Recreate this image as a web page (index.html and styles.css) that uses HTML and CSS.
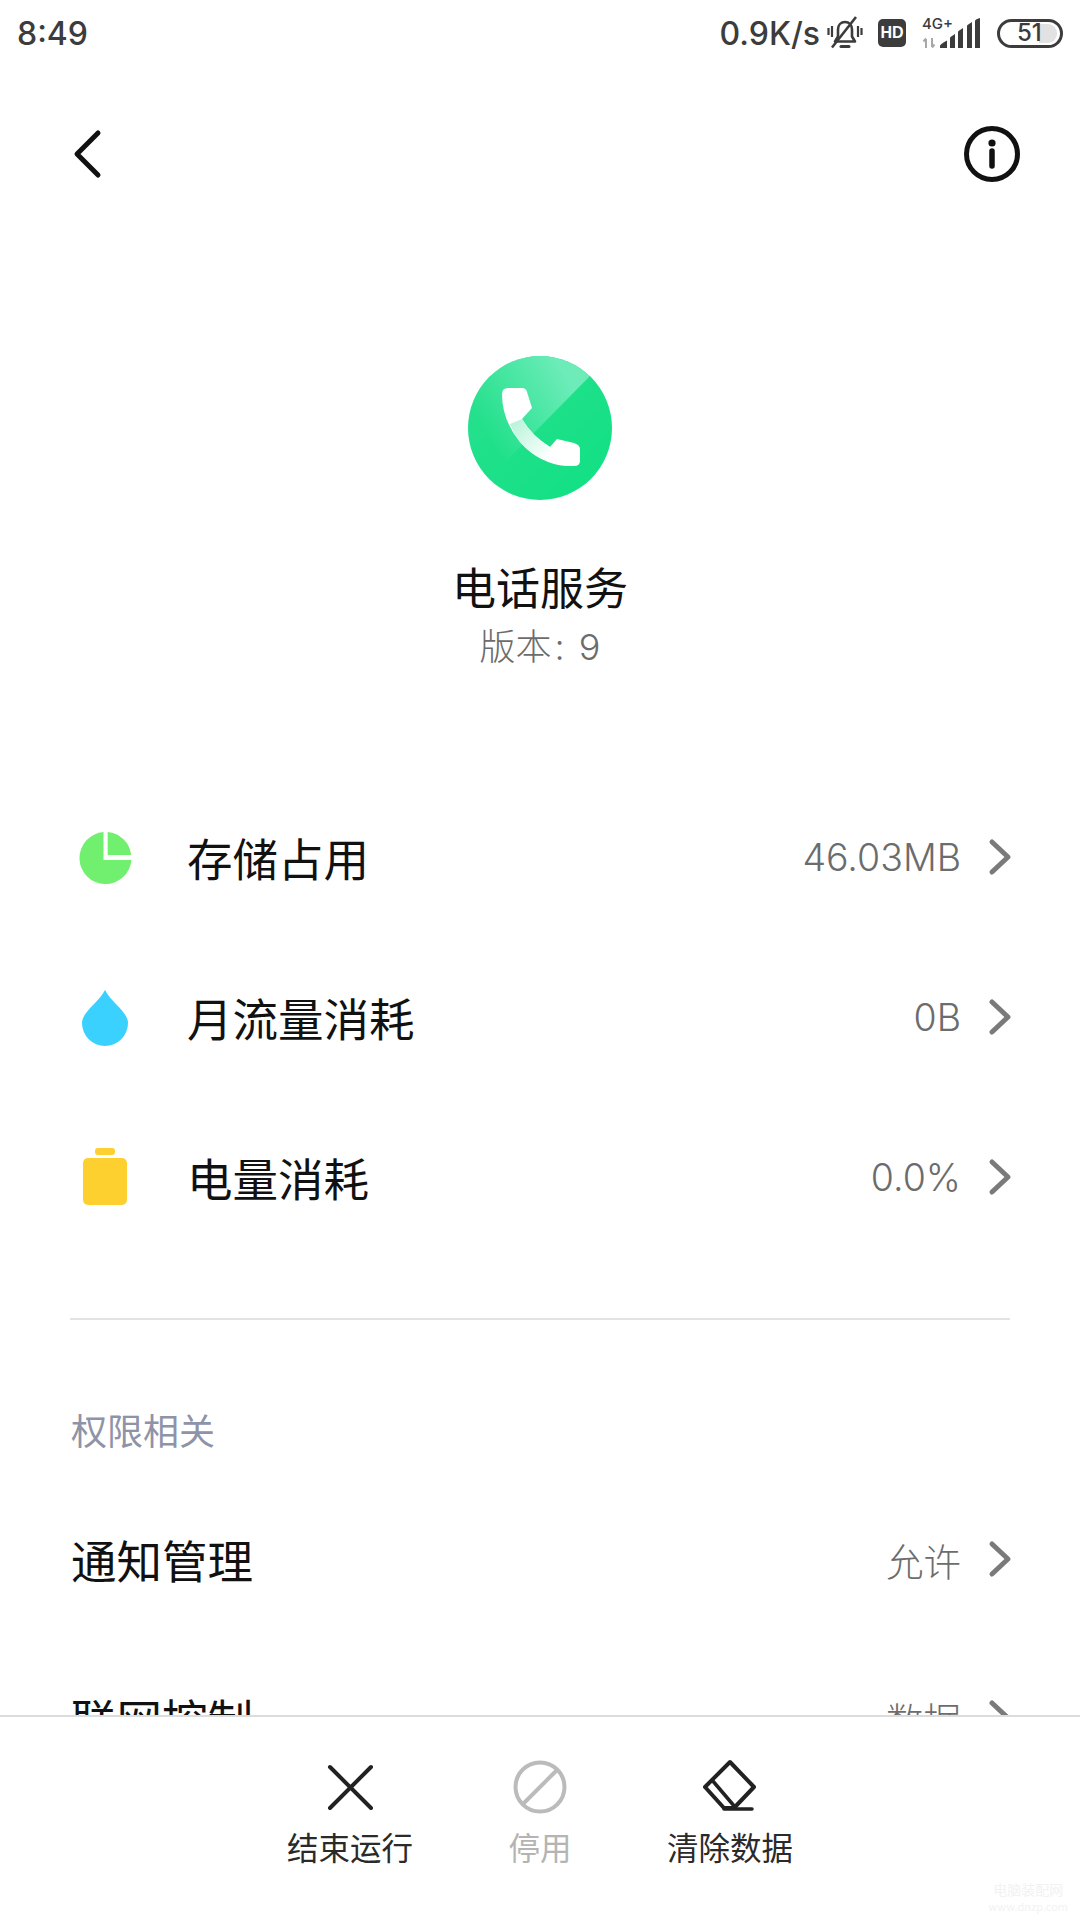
FILE: index.html
```html
<!DOCTYPE html>
<html lang="zh-CN">
<head>
<meta charset="utf-8">
<title>电话服务</title>
<link rel="stylesheet" href="styles.css">
</head>
<body>
<div class="page">
  <div class="main">
    <header class="status">
      <span class="time">8:49</span>
      <div class="status-right">
        <span class="speed">0.9K/s</span>
        <svg class="ic-bell" viewBox="0 0 36 34" width="36" height="34"><path d="M8 25.500h20l-3-5v-7c0-4.500-3-7.500-7-7.500s-7 3-7 7.500v7z" fill="none" stroke="#3c3c3c" stroke-width="2.600" stroke-linejoin="round"/><path d="M14 30.500h8" stroke="#3c3c3c" stroke-width="3" stroke-linecap="round"/><path d="M5 31.500L29 1" stroke="#3c3c3c" stroke-width="2.600"/><path d="M1.500 12v7M5 10v11M31 10v11M34.500 12v7" stroke="#3c3c3c" stroke-width="2.200"/></svg>
        <span class="hd">HD</span>
        <div class="signal">
          <span class="net">4G+</span>
          <svg viewBox="0 0 58 30" width="58" height="30"><path d="M4 30V21M1.500 23.500L4 20.500M10 20v9M12.500 26.500L10 29.500" stroke="#a8a8a8" stroke-width="2" fill="none"/><path d="M18 30v-2q0-2 7-5.500V30zM28 30V20q0-1 2-2l3-2v14zM36 30V14q0-1 2-2l3-2v20zM45 30V8q0-1 2-2l3-2v26zM53 30V3q0-1 2-2l3-1v30z" fill="#3c3c3c"/></svg>
        </div>
        <div class="battery"><span class="battery-fill"></span><span class="battery-num">51</span></div>
      </div>
    </header>

    <nav class="topbar">
      <svg viewBox="0 0 30 48" width="30" height="48"><path d="M26 3L5 24l21 21" fill="none" stroke="#111" stroke-width="5" stroke-linecap="round" stroke-linejoin="round"/></svg>
      <svg viewBox="0 0 56 56" width="56" height="56"><circle cx="28" cy="28" r="25.500" fill="none" stroke="#111" stroke-width="5"/><circle cx="28" cy="17" r="3.600" fill="#111"/><path d="M28 25v15" stroke="#111" stroke-width="5.500" stroke-linecap="round"/></svg>
    </nav>

    <section class="app">
      <svg class="app-icon" viewBox="0 0 144 144" width="144" height="144">
        <defs>
          <linearGradient id="gBase" x1="0" y1="0" x2="1" y2="1"><stop offset="0" stop-color="#2ae08f"/><stop offset="1" stop-color="#10e083"/></linearGradient>
          <linearGradient id="gShine" gradientUnits="userSpaceOnUse" x1="108" y1="36" x2="22" y2="84"><stop offset="0" stop-color="#6decb9"/><stop offset="1" stop-color="#6decb9" stop-opacity="0"/></linearGradient>
          <linearGradient id="gPale" gradientUnits="userSpaceOnUse" x1="46" y1="62" x2="84" y2="100"><stop offset="0" stop-color="#b5f3d9"/><stop offset="1" stop-color="#fff"/></linearGradient>
          <clipPath id="cCircle"><circle cx="72" cy="72" r="72"/></clipPath>
        </defs>
        <circle cx="72" cy="72" r="72" fill="url(#gBase)"/>
        <path d="M121 21L0 144V0H121z" fill="url(#gShine)" clip-path="url(#cCircle)"/>
        <path d="M34 38Q34 32 40 32H54Q58 32 59 36L64 52 54 63Q64 80 82 91L89 83 106 87Q112 89 112 93V105Q112 110 106 110H98Q72 108 52 86 34 64 34 38z" fill="#fff"/>
        <path d="M54 63Q64 80 82 91L76 104Q62 98 52 86 46 78 42 68z" fill="url(#gPale)"/>
      </svg>
      <h1 class="app-name">电话服务</h1>
      <p class="app-version">版本<span class="colon">:</span> 9</p>
    </section>

    <section class="stats">
      <div class="row">
        <svg class="row-icon" viewBox="0 0 56 56" width="56" height="56"><path d="M26.500 3.100A26 26 0 1 0 54.400 31H26.500z" fill="#71ef6f"/><path d="M30.700 3.100A26 26 0 0 1 54.200 26H30.700z" fill="#71ef6f"/></svg>
        <span class="row-label">存储占用</span><span class="row-value">46.03MB</span>
        <svg class="chev" viewBox="0 0 24 36" width="24" height="36"><path d="M4 3l16 15L4 33" fill="none" stroke="#7a7a7a" stroke-width="5" stroke-linecap="round" stroke-linejoin="round"/></svg>
      </div>
      <div class="row">
        <svg class="row-icon" viewBox="0 0 56 56" width="56" height="56"><path d="M28 1C22 13 5 23 5 34a23 23 0 0 0 46 0C51 23 34 13 28 1z" fill="#3ad1ff"/></svg>
        <span class="row-label">月流量消耗</span><span class="row-value">0B</span>
        <svg class="chev" viewBox="0 0 24 36" width="24" height="36"><path d="M4 3l16 15L4 33" fill="none" stroke="#7a7a7a" stroke-width="5" stroke-linecap="round" stroke-linejoin="round"/></svg>
      </div>
      <div class="row">
        <svg class="row-icon" viewBox="0 0 56 56" width="56" height="56"><rect x="18" y="-1" width="20" height="7" rx="3" fill="#fdd02f"/><rect x="6" y="9" width="44" height="47" rx="5" fill="#fdd02f"/></svg>
        <span class="row-label">电量消耗</span><span class="row-value">0.0%</span>
        <svg class="chev" viewBox="0 0 24 36" width="24" height="36"><path d="M4 3l16 15L4 33" fill="none" stroke="#7a7a7a" stroke-width="5" stroke-linecap="round" stroke-linejoin="round"/></svg>
      </div>
    </section>

    <hr class="divider">

    <h2 class="section-title">权限相关</h2>
    <div class="row row-plain">
      <span class="row-label">通知管理</span><span class="row-value">允许</span>
      <svg class="chev" viewBox="0 0 24 36" width="24" height="36"><path d="M4 3l16 15L4 33" fill="none" stroke="#7a7a7a" stroke-width="5" stroke-linecap="round" stroke-linejoin="round"/></svg>
    </div>
    <div class="row row-plain">
      <span class="row-label">联网控制</span><span class="row-value">数据</span>
      <svg class="chev" viewBox="0 0 24 36" width="24" height="36"><path d="M4 3l16 15L4 33" fill="none" stroke="#7a7a7a" stroke-width="5" stroke-linecap="round" stroke-linejoin="round"/></svg>
    </div>
  </div>

  <footer class="actions">
    <div class="action">
      <svg viewBox="0 0 56 56" width="56" height="56"><path d="M8 8l41 41M49 8L8 49" stroke="#222" stroke-width="4" stroke-linecap="round"/></svg>
      <span>结束运行</span>
    </div>
    <div class="action action-off">
      <svg viewBox="0 0 56 56" width="56" height="56"><circle cx="28" cy="28" r="24.500" fill="none" stroke="#bbb" stroke-width="4"/><path d="M11 45L45 11" stroke="#bbb" stroke-width="4"/></svg>
      <span>停用</span>
    </div>
    <div class="action">
      <svg viewBox="0 0 56 56" width="56" height="56"><path d="M28 3l24 25-20 21H22L3 28z" fill="none" stroke="#222" stroke-width="4" stroke-linejoin="round"/><path d="M10 21l23 27M22 50h28" fill="none" stroke="#222" stroke-width="3.500" stroke-linecap="round"/></svg>
      <span>清除数据</span>
    </div>
  </footer>
  <div class="watermark">电脑装配网<br><small>www.dnzp.com</small></div>
</div>
</body>
</html>
```
FILE: styles.css
```css
* { box-sizing: border-box; }
html, body { margin: 0; padding: 0; background: #fff; }
body { font-family: "Noto Sans CJK SC", "Noto Sans", sans-serif; color: #111; }
svg { overflow: visible; }
.page { position: relative; width: 1080px; height: 1920px; display: flex; flex-direction: column; overflow: hidden; }
.main { flex: 1; min-height: 0; overflow: hidden; }

.status { height: 66px; padding: 0 17px 0 17px; display: flex; align-items: center; justify-content: space-between; color: #3c3c3c; }
.time { font-size: 32px; font-weight: 500; font-family: "Inter", sans-serif; }
.status-right { display: flex; align-items: center; }
.speed { font-size: 32px; font-weight: 500; font-family: "Inter", sans-serif; margin-right: 7px; }
.hd { width: 28px; height: 28px; margin-left: 15px; border-radius: 5px; background: #3c3c3c; color: #fff; font: 700 16px/28px "Liberation Sans", sans-serif; text-align: center; }
.signal { position: relative; width: 58px; height: 30px; margin-left: 16px; }
.signal svg { position: absolute; left: 0; top: 0; }
.net { position: absolute; left: 0; top: -1px; font: 500 15px/14px "Inter", sans-serif; }
.battery { position: relative; width: 66px; height: 29px; margin-left: 17px; border: 3.500px solid #3c3c3c; border-radius: 15px; overflow: hidden; display: flex; align-items: center; padding-left: 17px; }
.battery-fill { position: absolute; left: 39px; top: 2px; bottom: 2px; right: 3px; border-radius: 0 9px 9px 0; background: #e2e2e2; }
.battery-num { position: relative; font: 500 24px/1 "Inter", sans-serif; }

.topbar { height: 64px; margin-top: 56px; padding: 0 60px 0 72px; display: flex; align-items: center; justify-content: space-between; }

.app { margin-top: 170px; display: flex; flex-direction: column; align-items: center; }
.app-icon { display: block; }
.app-name { margin: 56px 0 0; font-size: 44px; font-weight: 400; line-height: 60px; color: #111; }
.app-version { margin: 6px 0 0; font-family: "Inter", "Noto Sans CJK SC", sans-serif; font-weight: 300; font-size: 36px; line-height: 50px; color: #6c6c6c; }
.colon { margin-left: 3px; margin-right: 4px; }

.stats { margin-top: 105px; }
.row { height: 160px; padding: 0 68px 0 77px; display: flex; align-items: center; }
.row-icon { flex: none; margin-right: 54px; }
.row-label { flex: 1; font-size: 45.500px; color: #111; }
.row-value { font-family: "Inter", "Noto Sans CJK SC", sans-serif; font-weight: 300; font-size: 37.500px; color: #6c6c6c; margin-right: 27px; }
.chev { flex: none; }

.divider { margin: 61px 70px 0; border: 0; border-top: 2px solid #e3e3e3; }
.section-title { margin: 84px 0 0 71px; font-size: 36px; font-weight: 400; line-height: 50px; color: #8e93a8; }
.row-plain { padding-left: 71px; margin-top: 52px; height: 106px; }
.row-plain + .row-plain { margin-top: 53px; }

.actions { flex: none; height: 205px; border-top: 2px solid #dcdcdc; background: #fff; display: flex; justify-content: center; padding-top: 42px; }
.action { width: 190px; display: flex; flex-direction: column; align-items: center; font-size: 31.500px; color: #2a2a2a; white-space: nowrap; }
.action span { margin-top: 9px; line-height: 44px; }
.action-off { color: #b4b4b4; }
.watermark { position: absolute; right: 12px; bottom: 6px; font-size: 14px; line-height: 16px; color: #f2f2f2; text-align: center; }
.watermark small { font-size: 11px; }
```
